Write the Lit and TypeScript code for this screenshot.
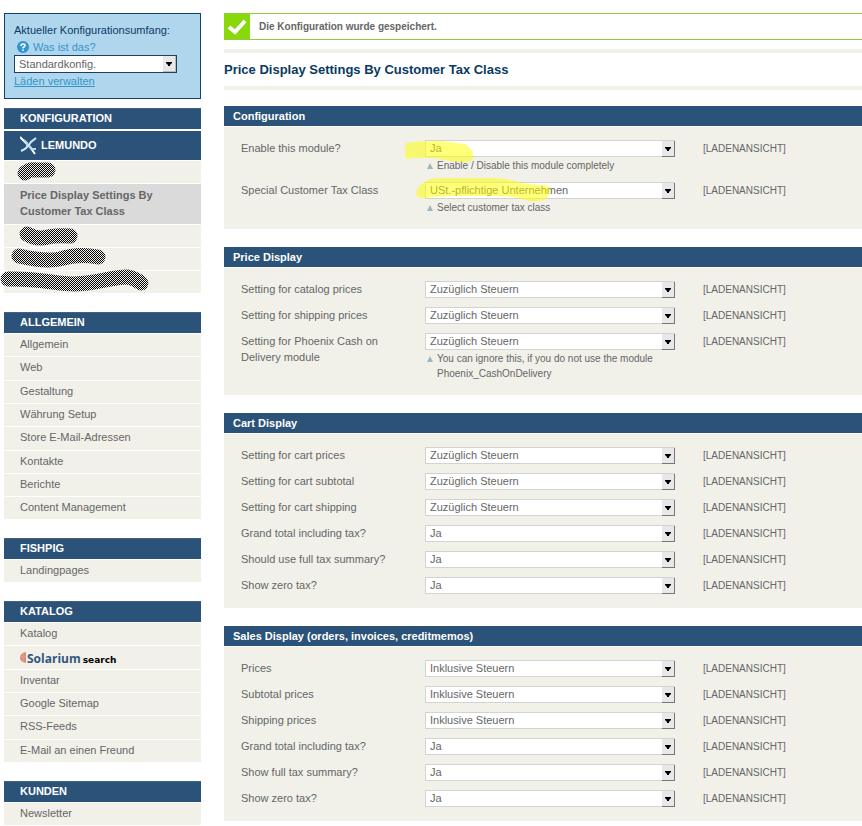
import { LitElement, html, css, nothing } from "lit";
import { customElement, property } from "lit/decorators.js";

interface Field {
  label: string;
  value: string;
  hint?: string;
  mark?: string;
}

interface Group {
  title: string;
  fields: Field[];
}

interface NavItem {
  label?: string;
  active?: boolean;
  stroke?: string;
  logo?: boolean;
}

interface NavGroup {
  title: string;
  brand?: boolean;
  items: NavItem[];
}

const GROUPS: Group[] = [
  {
    title: "Configuration",
    fields: [
      {
        label: "Enable this module?",
        value: "Ja",
        hint: "Enable / Disable this module completely",
        mark: "M-19 3Q-8 1 16 1Q32 3 40 4Q49 10 48 16Q48 22 41 22Q28 22 20 20Q0 16-19 19Q-21 11-19 3Z",
      },
      {
        label: "Special Customer Tax Class",
        value: "USt.-pflichtige Unternehmen",
        hint: "Select customer tax class",
        mark: "M-9 12Q-9 6-2 1Q4-4 14-4L70-4Q86-3 96 1Q112 3 125 4Q126 11 122 16Q118 20 104 19Q90 15 78 14L30 14Q14 14 0 16Q-8 17-9 12Z",
      },
    ],
  },
  {
    title: "Price Display",
    fields: [
      { label: "Setting for catalog prices", value: "Zuzüglich Steuern" },
      { label: "Setting for shipping prices", value: "Zuzüglich Steuern" },
      {
        label: "Setting for Phoenix Cash on Delivery module",
        value: "Zuzüglich Steuern",
        hint: "You can ignore this, if you do not use the module Phoenix_CashOnDelivery",
      },
    ],
  },
  {
    title: "Cart Display",
    fields: [
      { label: "Setting for cart prices", value: "Zuzüglich Steuern" },
      { label: "Setting for cart subtotal", value: "Zuzüglich Steuern" },
      { label: "Setting for cart shipping", value: "Zuzüglich Steuern" },
      { label: "Grand total including tax?", value: "Ja" },
      { label: "Should use full tax summary?", value: "Ja" },
      { label: "Show zero tax?", value: "Ja" },
    ],
  },
  {
    title: "Sales Display (orders, invoices, creditmemos)",
    fields: [
      { label: "Prices", value: "Inklusive Steuern" },
      { label: "Subtotal prices", value: "Inklusive Steuern" },
      { label: "Shipping prices", value: "Inklusive Steuern" },
      { label: "Grand total including tax?", value: "Ja" },
      { label: "Show full tax summary?", value: "Ja" },
      { label: "Show zero tax?", value: "Ja" },
    ],
  },
];

const NAV: NavGroup[] = [
  {
    title: "Lemundo",
    brand: true,
    items: [
      { stroke: "M21 12Q26 8 32 9L44 9" },
      { label: "Price Display Settings By Customer Tax Class", active: true },
      { stroke: "M23 9Q33 15 44 12Q51 10 66 11" },
      { stroke: "M15 8Q41 14 56 11Q74 5 94 9" },
      { stroke: "M4 8C36 7 51 13 71 13C96 12 111 5 124 6Q132 8 137 12" },
    ],
  },
  {
    title: "Allgemein",
    items: [
      { label: "Allgemein" },
      { label: "Web" },
      { label: "Gestaltung" },
      { label: "Währung Setup" },
      { label: "Store E-Mail-Adressen" },
      { label: "Kontakte" },
      { label: "Berichte" },
      { label: "Content Management" },
    ],
  },
  { title: "Fishpig", items: [{ label: "Landingpages" }] },
  {
    title: "Katalog",
    items: [
      { label: "Katalog" },
      { logo: true },
      { label: "Inventar" },
      { label: "Google Sitemap" },
      { label: "RSS-Feeds" },
      { label: "E-Mail an einen Freund" },
    ],
  },
  { title: "Kunden", items: [{ label: "Newsletter" }] },
];

const selectStyles = css`
  .select-box {
    position: relative;
    height: 17px;
  }
  .select {
    appearance: none;
    box-sizing: border-box;
    display: block;
    width: 100%;
    height: 100%;
    margin: 0;
    padding: 0 16px 0 4px;
    border: 1px solid #d3d3d0;
    border-radius: 0;
    background: #fff;
    color: #666;
    font: 11px/15px "Liberation Sans", Arial, sans-serif;
  }
  .arrow {
    position: absolute;
    top: 1px;
    right: 0;
    bottom: 0;
    width: 13px;
    box-sizing: border-box;
    border-right: 1px solid #777;
    border-bottom: 1px solid #777;
    background: #e8e8e8;
    pointer-events: none;
    display: grid;
    place-items: center;
  }
`;

const selectBox = (id: string, value: string) => html`
  <div class="select-box">
    <select class="select" id=${id}>
      <option>${value}</option>
    </select>
    <span class="arrow">
      <svg width="6" height="4" viewBox="0 0 6 4"><path d="M0 0H6V1L4 3V4H2V3L0 1Z" fill="#000" /></svg>
    </span>
  </div>
`;

@customElement("config-group")
export class ConfigGroup extends LitElement {
  @property({ attribute: false }) group!: Group;

  static styles = [
    selectStyles,
    css`
      :host {
        display: block;
      }
      .title {
        margin: 0 0 1px;
        padding: 0 9px;
        background: #2b5278;
        color: #fff;
        font-size: 11px;
        line-height: 20px;
      }
      .fields {
        padding: 8px 17px 10px;
        background: #f1f1ea;
      }
      .row {
        display: grid;
        grid-template-columns: 156px 250px 1fr;
        column-gap: 28px;
        padding: 5px 0 4px;
        line-height: 16px;
      }
      .control {
        position: relative;
      }
      .hint {
        display: flex;
        gap: 4px;
        margin: 1px 0 0 2px;
        font-size: 10px;
        line-height: 15px;
      }
      .hint svg {
        flex: none;
        margin-top: 5px;
      }
      .hint p {
        margin: 0;
        max-width: 220px;
      }
      .scope {
        font-size: 10px;
        line-height: 17px;
      }
      .mark {
        position: absolute;
        top: 0;
        left: 0;
        width: 1px;
        height: 1px;
        overflow: visible;
        pointer-events: none;
      }
    `,
  ];

  render() {
    return html`
      <h2 class="title">${this.group.title}</h2>
      <div class="fields">
        ${this.group.fields.map(
          (f, i) => html`
            <div class="row">
              <label for="field-${i}">${f.label}</label>
              <div class="control">
                ${selectBox(`field-${i}`, f.value)}
                ${f.hint
                  ? html`<div class="hint">
                      <svg width="6" height="6" viewBox="0 0 6 6"><path d="M3 0L6 6H0Z" fill="#a3b5b9" /></svg>
                      <p>${f.hint}</p>
                    </div>`
                  : nothing}
                ${f.mark
                  ? html`<svg class="mark"><path d=${f.mark} fill="#ffff00" fill-opacity="0.52" /></svg>`
                  : nothing}
              </div>
              <span class="scope">[LADENANSICHT]</span>
            </div>
          `,
        )}
      </div>
    `;
  }
}

@customElement("side-nav")
export class SideNav extends LitElement {
  static styles = css`
    :host {
      display: block;
    }
    .heading {
      box-sizing: border-box;
      margin: 0;
      padding: 0 16px;
      height: 21px;
      border-top: 1px solid #44627f;
      background: #2b5278;
      color: #fff;
      font-size: 11px;
      line-height: 19px;
      text-transform: uppercase;
    }
    .brand {
      display: flex;
      align-items: center;
      gap: 4px;
      height: 29px;
      margin-top: 2px;
      border-top: 0;
    }
    .list {
      list-style: none;
      margin: 0 0 19px;
      padding: 0;
    }
    .item {
      position: relative;
      min-height: 22px;
      margin-top: 1px;
      background: #f1f1ea;
    }
    .item:nth-child(3n + 2):not(:last-child) {
      padding-bottom: 1px;
    }
    .link {
      display: block;
      padding: 2px 16px 4px;
      min-height: 16px;
      color: #666;
      line-height: 16px;
      text-decoration: none;
    }
    .active {
      background: #dadada;
      font-weight: bold;
    }
    .active .link {
      padding: 3px 16px 4px;
    }
    .stroke {
      position: absolute;
      top: 0;
      left: 0;
      width: 1px;
      height: 1px;
      overflow: visible;
      z-index: 1;
    }
    .logo {
      display: flex;
      align-items: baseline;
      box-sizing: border-box;
      height: 16px;
      padding-top: 3px;
    }
    .name {
      color: #34567f;
      font: 700 12px/16px "Open Sans", sans-serif;
    }
    .kind {
      margin-left: 2px;
      color: #000;
      font: bold 9px/16px "DejaVu Sans", sans-serif;
    }
  `;

  private content(item: NavItem, id: string) {
    if (item.stroke) {
      return html`<svg class="stroke" aria-hidden="true">
        <pattern id=${id} width="2" height="2" patternUnits="userSpaceOnUse">
          <path d="M0 0H1V1H0ZM1 1H2V2H1Z" fill="#000" />
        </pattern>
        <path
          d=${item.stroke}
          fill="none"
          stroke="url(#${id})"
          stroke-width="15"
          stroke-linecap="round"
          stroke-linejoin="round"
        />
      </svg>`;
    }
    if (item.logo) {
      return html`<span class="logo">
        <svg width="7" height="11" viewBox="0 0 7 11">
          <path d="M6 0Q0 1 0 6Q0 10 6 11Z" fill="#dc8d78" />
          <path d="M3 2V10M0 5H6" stroke="#e8ab9a" stroke-width="0.6" fill="none" />
        </svg>
        <span class="name">Solarium</span><span class="kind">search</span>
      </span>`;
    }
    return item.label;
  }

  render() {
    return html`
      <h2 class="heading">Konfiguration</h2>
      ${NAV.map(
        (g, gi) => html`
          <h3 class="heading ${g.brand ? "brand" : ""}">
            ${g.brand
              ? html`<svg width="17" height="19" viewBox="0 0 17 19">
                  <path d="M0 1L5 6L10 11L15 18" stroke="#fff" stroke-width="2" fill="none" />
                  <path d="M16 2L11 6L8 10L5 13L1 15" stroke="#d5ecf8" stroke-width="2" fill="none" />
                  <path d="M4 4L7 7V11M9 10L12 13H16" stroke="#b5dcee" stroke-width="2" fill="none" />
                </svg>`
              : nothing}<span>${g.title}</span>
          </h3>
          <ul class="list">
            ${g.items.map(
              (item, i) => html`<li class="item ${item.active ? "active" : ""}">
                <a class="link" href="#">${this.content(item, `dots-${gi}-${i}`)}</a>
              </li>`,
            )}
          </ul>
        `,
      )}
    `;
  }
}

@customElement("app-root")
export class AppRoot extends LitElement {
  static styles = [
    selectStyles,
    css`
      :host {
        display: flex;
        align-items: flex-start;
        gap: 23px;
        padding: 13px 0 0 4px;
        background: #fff;
        color: #666;
        font: 11px/16px "Liberation Sans", Arial, sans-serif;
      }
      .side {
        flex: none;
        width: 197px;
      }
      .main {
        flex: 1;
        min-width: 0;
      }
      .scope {
        margin-bottom: 9px;
        padding: 8px 9px 9px;
        border: 1px solid #1a4063;
        background: #b0d6ee;
        color: #0a3a63;
      }
      .scope-label {
        display: block;
      }
      .help {
        display: flex;
        align-items: center;
        gap: 4px;
        height: 17px;
        margin-left: 3px;
        color: #2f96cb;
        text-decoration: none;
      }
      .scope .select-box {
        width: 163px;
        height: 18px;
      }
      .scope .select {
        border-color: #1a4063;
      }
      .scope .arrow {
        right: 1px;
        bottom: 1px;
        border-color: #bbb;
      }
      .stores {
        display: block;
        color: #2f96cb;
      }
      .message {
        display: flex;
        align-items: center;
        height: 25px;
        border-top: 1px solid #90cc3c;
        border-bottom: 1px solid #90cc3c;
        font-size: 10px;
        font-weight: bold;
      }
      .tick {
        display: grid;
        place-items: center;
        width: 26px;
        height: 100%;
        margin-right: 9px;
        background: #88d80c;
      }
      .page-title {
        margin: 9px 0 16px;
        border: solid #f1f0eb;
        border-width: 4px 0;
        padding-top: 1px;
        color: #0a3a63;
        font-size: 13px;
        line-height: 32px;
      }
      .groups {
        display: grid;
        gap: 18px;
      }
    `,
  ];

  render() {
    return html`
      <aside class="side">
        <div class="scope">
          <label class="scope-label" for="scope">Aktueller Konfigurationsumfang:</label>
          <a class="help" href="#">
            <svg width="12" height="12" viewBox="0 0 12 12">
              <circle cx="6" cy="6" r="6" fill="#2f96cb" />
              <path d="M4 5Q4 3 6 3Q8 3 8 4.5Q8 5.5 6 6.5V7.5M6 8.5V10" stroke="#fff" stroke-width="1.6" fill="none" />
            </svg>
            Was ist das?
          </a>
          ${selectBox("scope", "Standardkonfig.")}
          <a class="stores" href="#">Läden verwalten</a>
        </div>
        <side-nav></side-nav>
      </aside>
      <main class="main">
        <div class="message" role="status">
          <span class="tick">
            <svg width="20" height="16" viewBox="0 0 20 16">
              <path d="M2 8L8 13L18 2" stroke="#fff" stroke-width="4" fill="none" />
            </svg>
          </span>
          Die Konfiguration wurde gespeichert.
        </div>
        <h1 class="page-title">Price Display Settings By Customer Tax Class</h1>
        <div class="groups">${GROUPS.map((g) => html`<config-group .group=${g}></config-group>`)}</div>
      </main>
    `;
  }
}
